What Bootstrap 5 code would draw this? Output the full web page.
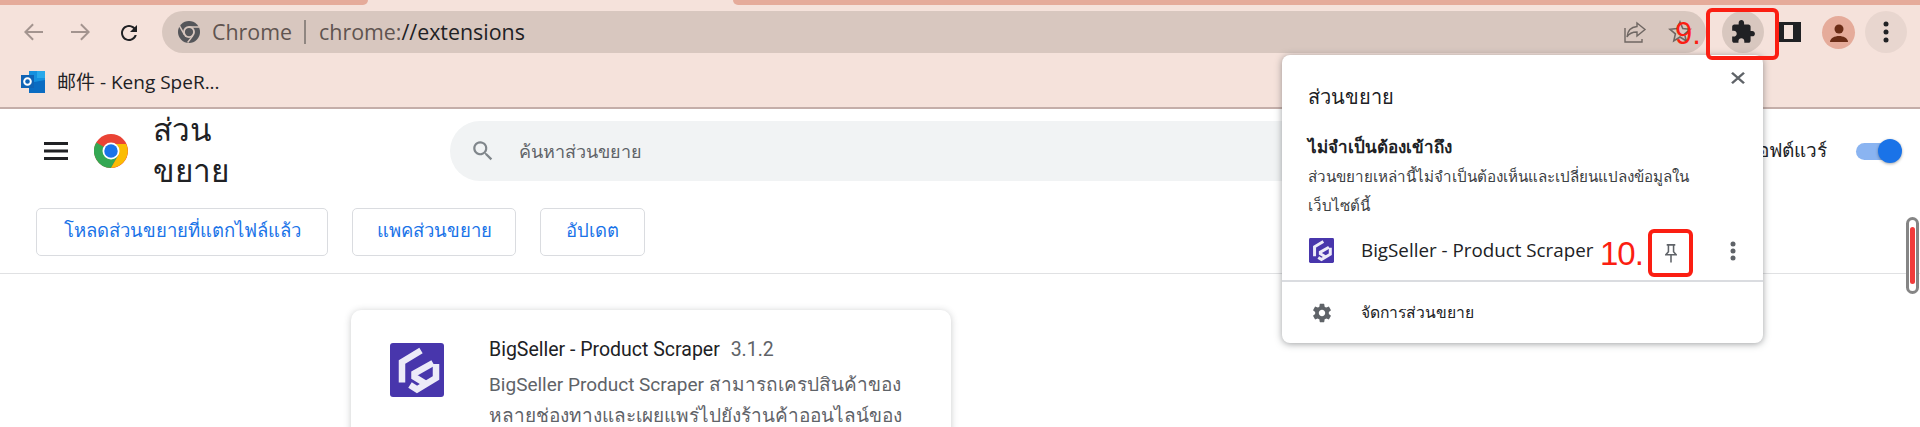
<!DOCTYPE html>
<html lang="th">
<head>
    <title>ส่วนขยาย</title>
    <meta charset="utf-8">
    <meta name="viewport" content="width=device-width, initial-scale=1">
    <link href="https://cdn.jsdelivr.net/npm/bootstrap@5.3.1/dist/css/bootstrap.min.css" rel="stylesheet">
    <script src="https://cdn.jsdelivr.net/npm/bootstrap@5.3.1/dist/js/bootstrap.bundle.min.js"></script>
    <style>
        html, body { height: 427px; overflow: hidden; }
        body { position: relative; font-family: "Roboto", "Noto Sans", "Liberation Sans", "Noto Sans CJK SC", sans-serif; color: #202124; background: #fff; }
        .tab-strip { height: 5px; background: #f5e2db; }
        .tab-band { background: #e5ab9a; }
        .tab-left { width: 368px; border-bottom-right-radius: 5px; }
        .tab-right { margin-left: 365px; flex: 1; border-bottom-left-radius: 5px; }
        .chrome-bar { height: 104px; background: #f5e2db; border-bottom: 2px solid #c4aea9; }
        .tool-row { height: 53px; padding: 6px 0 0 21px; }
        .tool-icon { width: 24px; margin-right: 24px; padding-top: 9px; display: flex; justify-content: center; }
        .omni { width: 1544px; height: 42px; margin-left: -3px; background: #d8c7bf; border-radius: 21px; padding: 0 14px 0 16px; font-family: "Open Sans", sans-serif; font-size: 21.400px; color: #5f5450; }
        .omni-sep { width: 2px; height: 24px; background: #8f8681; margin: 0 13px 0 12px; }
        .omni-url em { font-style: normal; color: #202124; }
        .omni-end { gap: 21px; }
        .round-btn { width: 42px; height: 42px; border-radius: 50%; display: flex; align-items: center; justify-content: center; }
        .round-puzzle { background: #d8c7bf; margin-left: 16px; }
        .round-menu { background: #e8d6cf; margin-left: 10px; }
        .side-icon { width: 22px; height: 20px; margin: 11px 0 0 15px; border: solid #202124; border-width: 3px 8px 3px 5px; }
        .avatar { width: 33px; height: 33px; border-radius: 50%; background: #e5ab9a; margin: 5px 0 0 21px; display: flex; align-items: center; justify-content: center; }
        .book-row { padding-left: 21px; height: 48px; font-family: "Open Sans", "Noto Sans CJK SC", sans-serif; font-size: 19px; gap: 12px; }
        .ext-head { height: 84px; padding-left: 44px; }
        .ext-logo-main { margin-left: 26px; flex: none; }
        .ext-title { width: 90px; margin-left: 25px; font-size: 31.500px; line-height: 41px; font-weight: 500; flex: none; }
        .search-box { width: 950px; height: 60px; margin-left: 207px; padding-left: 20px; background: #f1f3f4; border-radius: 30px; font-size: 18px; color: #5f6368; gap: 23px; flex: none; }
        .dev-text { position: absolute; right: 93px; top: 138px; font-size: 19px; line-height: 26px; white-space: nowrap; }
        .toggle-track { position: absolute; left: 1856px; top: 143px; width: 39px; height: 17px; background: #8ab4f1; border-radius: 9px; }
        .toggle-dot { position: absolute; right: -7px; top: -4px; width: 24px; height: 24px; border-radius: 50%; background: #1a73e8; box-shadow: 0 1px 3px rgba(0,0,0,.35); }
        .action-row { height: 81px; padding: 15px 0 0 36px; gap: 24px; border-bottom: 1px solid #e0e1e3; }
        .act-btn { height: 48px; border: 1px solid #dadce0; border-radius: 5px; background: #fff; color: #1a73e8; font-size: 18.500px; padding: 0; display: flex; align-items: center; justify-content: center; flex: none; }
        .act-load { width: 292px; }
        .act-pack { width: 164px; }
        .act-update { width: 105px; }
        .ext-wrap { padding: 36px 0 0 351px; }
        .ext-card { width: 600px; height: 200px; border-radius: 10px; box-shadow: 0 1px 7px rgba(60,64,67,.28); padding: 33px 20px 0 39px; gap: 45px; background: #fff; }
        .ext-logo { flex: none; }
        .ext-name { font-size: 19.500px; line-height: 26px; color: #202124; margin-top: -6px; white-space: nowrap; }
        .ext-ver { color: #5f6368; margin-left: 6px; }
        .ext-desc { font-size: 19px; line-height: 31px; color: #5f6368; margin-top: 6px; white-space: nowrap; }
        .pop { position: absolute; left: 1282px; top: 55px; width: 481px; height: 288px; background: #fff; border-radius: 8px; box-shadow: 0 1px 7px rgba(60,64,67,.5); }
        .pop-close { position: absolute; left: 449px; top: 17px; }
        .pop-head { padding: 27px 0 0 26px; font-size: 20px; line-height: 30px; }
        .pop-sub { padding: 21px 0 0 26px; font-size: 17px; font-weight: 700; line-height: 28px; }
        .pop-text { padding: 2px 0 0 26px; font-size: 15.200px; line-height: 29px; color: #3c4043; white-space: nowrap; }
        .pop-item { height: 61px; padding-left: 27px; border-bottom: 2px solid #dadce0; font-family: "Open Sans", sans-serif; font-size: 18.800px; gap: 27px; }
        .pop-dots { position: absolute; left: 448px; top: 186px; }
        .pop-manage { height: 62px; padding-left: 29px; font-size: 15.700px; gap: 28px; }
        .mark-box { position: absolute; border: 4px solid #fb1e12; border-radius: 6px; }
        .mark-puzzle { left: 1706px; top: 8px; width: 73px; height: 52px; }
        .mark-pin { left: 1648px; top: 229px; width: 45px; height: 48px; }
        .mark-text { position: absolute; color: #fb1e12; font-family: "Liberation Sans", sans-serif; line-height: 1; }
        .mark-nine { left: 1675px; top: 18px; font-size: 31px; }
        .mark-ten { left: 1600px; top: 237px; font-size: 33px; letter-spacing: -1px; }
        .thumb { position: absolute; left: 1906px; top: 217px; width: 13px; height: 77px; background: #fff; border: 3px solid #858585; border-radius: 7px; padding: 7px 1px; }
        .thumb-core { height: 100%; background: #f13b3b; border-radius: 3px; }
    </style>
</head>
<body>
    <div class="tab-strip d-flex">
        <div class="tab-band tab-left"></div>
        <div class="tab-band tab-right"></div>
    </div>
    <div class="chrome-bar">
        <div class="tool-row d-flex align-items-start">
            <div class="tool-icon"><svg width="24" height="24" viewBox="0 0 24 24" fill="#a3948f"><path d="M22 11H6.800l6-6L11.400 3.600 3 12l8.400 8.400 1.400-1.400-6-6H22z"/></svg></div>
            <div class="tool-icon"><svg width="24" height="24" viewBox="0 0 24 24" fill="#a3948f"><path d="M2 11h15.200l-6-6 1.400-1.400L21 12l-8.400 8.400-1.400-1.400 6-6H2z"/></svg></div>
            <div class="tool-icon"><svg width="26" height="26" viewBox="0 0 24 24" fill="#202124"><path d="M17.650 6.350C16.200 4.900 14.210 4 12 4c-4.420 0-7.990 3.580-7.990 8s3.570 8 7.990 8c3.730 0 6.840-2.550 7.730-6h-2.080c-.82 2.330-3.040 4-5.650 4-3.310 0-6-2.690-6-6s2.690-6 6-6c1.660 0 3.140.69 4.220 1.780L13 11h7V4l-2.350 2.350z"/></svg></div>
            <div class="omni d-flex align-items-center">
                <svg width="22" height="22" viewBox="0 0 24 24" class="me-2"><circle cx="12" cy="12" r="12" fill="#55565a"/><circle cx="12" cy="12" r="6.500" fill="#d8c7bf"/><circle cx="12" cy="12" r="4.500" fill="#55565a"/><path d="M12 6.500h11M7 14.800 1.500 5M15.800 16.500 10.500 23.500" stroke="#d8c7bf" stroke-width="1.600" fill="none"/></svg>
                <span class="ms-1">Chrome</span><span class="omni-sep"></span>
                <span class="omni-url">chrome:<em>//extensions</em></span>
                <span class="ms-auto d-flex align-items-center omni-end">
                    <svg width="24" height="24" viewBox="0 0 24 24" fill="none" stroke="#6f6763" stroke-width="1.400"><path d="M14 3l8 6.500-8 6.500v-4c-5 0-8 1.500-10 5 .5-6 4-10 10-10.500z"/><path d="M2 8v14h17v-3"/></svg>
                    <svg width="24" height="24" viewBox="0 0 24 24" fill="none" stroke="#6f6763" stroke-width="1.600"><path d="M12 2l2.800 6.600 7.200.7-5.400 4.700 1.600 7L12 17l-6.200 3.900 1.600-7L2 9.300l7.200-.7z"/></svg>
                </span>
            </div>
            <div class="round-btn round-puzzle"><svg width="26" height="26" viewBox="0 0 24 24" fill="#202124"><path d="M20.500 11H19V7c0-1.100-.9-2-2-2h-4V3.500C13 2.120 11.880 1 10.500 1S8 2.120 8 3.500V5H4c-1.100 0-1.990.9-1.990 2v3.800H3.500c1.490 0 2.700 1.210 2.700 2.700s-1.210 2.700-2.700 2.700H2V20c0 1.100.9 2 2 2h3.800v-1.500c0-1.490 1.210-2.700 2.700-2.700 1.490 0 2.700 1.210 2.700 2.700V22H17c1.100 0 2-.9 2-2v-4h1.500c1.380 0 2.500-1.120 2.500-2.500S21.880 11 20.500 11z"/></svg></div>
            <div class="side-icon"></div>
            <div class="avatar"><svg width="24" height="24" viewBox="0 0 24 24" fill="#6a2c16"><circle cx="12" cy="8" r="4.500"/><path d="M3 21c0-4 5-6 9-6s9 2 9 6z"/></svg></div>
            <div class="round-btn round-menu"><svg width="6" height="22" viewBox="0 0 6 22" fill="#202124"><circle cx="3" cy="3" r="2.500"/><circle cx="3" cy="11" r="2.500"/><circle cx="3" cy="19" r="2.500"/></svg></div>
        </div>
        <div class="book-row d-flex align-items-center">
            <svg width="24" height="22" viewBox="0 0 24 22"><rect x="8" y="0" width="16" height="22" fill="#1490df"/><rect x="16" y="0" width="8" height="7" fill="#28a8ea"/><path d="M8 12l16-3v13H8z" fill="#0a6cc2"/><rect y="4" width="13" height="13" fill="#0f63b5"/><circle cx="6.500" cy="10.500" r="3.300" fill="none" stroke="#fff" stroke-width="2"/></svg>
            <span>邮件 - Keng SpeR...</span>
        </div>
    </div>
    <div class="ext-head d-flex align-items-center">
        <svg width="24" height="18" viewBox="0 0 24 18" fill="#202124" class="flex-shrink-0"><rect width="24" height="3"/><rect y="7.500" width="24" height="3"/><rect y="15" width="24" height="3"/></svg>
        <svg width="34" height="34" viewBox="0 0 48 48" class="ext-logo-main">
            <circle cx="24" cy="24" r="24" fill="#ea4335"/>
            <path d="M24 24 3.200 12A24 24 0 0 0 24 48l10.400-18z" fill="#34a853"/>
            <path d="M24 14h21.500A24 24 0 0 1 24 48l10.400-18z" fill="#fbbc04"/>
            <circle cx="24" cy="24" r="12" fill="#fff"/><circle cx="24" cy="24" r="9.500" fill="#1a73e8"/>
        </svg>
        <div class="ext-title">ส่วน<br>ขยาย</div>
        <div class="search-box d-flex align-items-center">
            <svg width="26" height="26" viewBox="0 0 24 24" fill="#80868b"><path d="M15.500 14h-.8l-.3-.3A6.500 6.500 0 1 0 13.700 14.400l.3.3v.8l5 5 1.500-1.500zm-6 0a4.500 4.500 0 1 1 0-9 4.500 4.500 0 0 1 0 9z"/></svg>
            <span>ค้นหาส่วนขยาย</span>
        </div>
    </div>
    <div class="dev-text">โหมดนักพัฒนาซอฟต์แวร์</div>
    <span class="toggle-track"><span class="toggle-dot"></span></span>
    <div class="action-row d-flex">
        <button type="button" class="act-btn act-load">โหลดส่วนขยายที่แตกไฟล์แล้ว</button>
        <button type="button" class="act-btn act-pack">แพคส่วนขยาย</button>
        <button type="button" class="act-btn act-update">อัปเดต</button>
    </div>
    <div class="ext-wrap">
        <div class="ext-card d-flex">
            <svg class="ext-logo" width="54" height="54" viewBox="0 0 54 54"><rect width="54" height="54" rx="3" fill="#4836ac"/><g fill="none" stroke="#ecebf8" stroke-width="6.500"><path d="M31 7.500 12 19V39.500"/><path d="M43 20 24.500 30.500V34L36 41"/><path d="M46 21V35L27 46.500 20 42"/></g></svg>
            <div>
                <div class="ext-name">BigSeller - Product Scraper <span class="ext-ver">3.1.2</span></div>
                <div class="ext-desc">BigSeller Product Scraper สามารถเครปสินค้าของ<br>หลายช่องทางและเผยแพร่ไปยังร้านค้าออนไลน์ของ</div>
            </div>
        </div>
    </div>

    <div class="pop">
        <svg class="pop-close" width="14" height="12" viewBox="0 0 14 14" preserveAspectRatio="none" stroke="#5f6368" stroke-width="2.500"><path d="M1 1l12 12M13 1 1 13"/></svg>
        <div class="pop-head">ส่วนขยาย</div>
        <div class="pop-sub">ไม่จำเป็นต้องเข้าถึง</div>
        <div class="pop-text">ส่วนขยายเหล่านี้ไม่จำเป็นต้องเห็นและเปลี่ยนแปลงข้อมูลใน<br>เว็บไซต์นี้</div>
        <div class="pop-item d-flex align-items-center">
            <svg width="25" height="25" viewBox="0 0 54 54"><rect width="54" height="54" rx="3" fill="#4836ac"/><g fill="none" stroke="#ecebf8" stroke-width="6.500"><path d="M31 7.500 12 19V39.500"/><path d="M43 20 24.500 30.500V34L36 41"/><path d="M46 21V35L27 46.500 20 42"/></g></svg>
            <span>BigSeller - Product Scraper</span>
        </div>
        <svg class="pop-dots" width="6" height="20" viewBox="0 0 6 20" fill="#5f6368"><circle cx="3" cy="3" r="2.500"/><circle cx="3" cy="10" r="2.500"/><circle cx="3" cy="17" r="2.500"/></svg>
        <div class="pop-manage d-flex align-items-center">
            <svg width="22" height="22" viewBox="0 0 24 24" fill="#5f6368"><path d="M19.430 12.980c.04-.32.07-.64.07-.98s-.03-.66-.07-.98l2.110-1.650c.19-.15.240-.42.120-.64l-2-3.460c-.12-.22-.39-.3-.61-.22l-2.490 1c-.52-.4-1.080-.73-1.690-.98l-.38-2.650A.488.488 0 0 0 14 2h-4c-.25 0-.46.18-.49.42l-.38 2.650c-.61.25-1.170.59-1.690.98l-2.490-1c-.23-.09-.49 0-.61.22l-2 3.460c-.13.22-.07.49.12.64l2.110 1.650c-.04.32-.07.65-.07.98s.03.66.07.98l-2.110 1.650c-.19.15-.24.42-.12.64l2 3.460c.12.22.39.3.61.22l2.490-1c.52.4 1.080.73 1.690.98l.38 2.650c.03.24.24.42.49.42h4c.25 0 .46-.18.49-.42l.38-2.650c.61-.25 1.170-.59 1.690-.98l2.490 1c.23.09.49 0 .61-.22l2-3.460c.12-.22.07-.49-.12-.64l-2.110-1.650zM12 15.500c-1.930 0-3.500-1.570-3.500-3.500s1.570-3.500 3.500-3.500 3.500 1.570 3.500 3.500-1.570 3.500-3.500 3.500z"/></svg>
            <span>จัดการส่วนขยาย</span>
        </div>
    </div>

    <div class="mark-box mark-puzzle"></div>
    <div class="mark-box mark-pin d-flex align-items-center justify-content-center">
        <svg width="12" height="20" viewBox="0 0 14 22" fill="none" stroke="#5f6368" stroke-width="1.800"><path d="M2 1.500h10M4 1.500v8l-3 3.500h12l-3-3.500v-8M7 13v9"/></svg>
    </div>
    <div class="mark-text mark-nine">9.</div>
    <div class="mark-text mark-ten">10.</div>
    <div class="thumb"><div class="thumb-core"></div></div>
</body>
</html>
